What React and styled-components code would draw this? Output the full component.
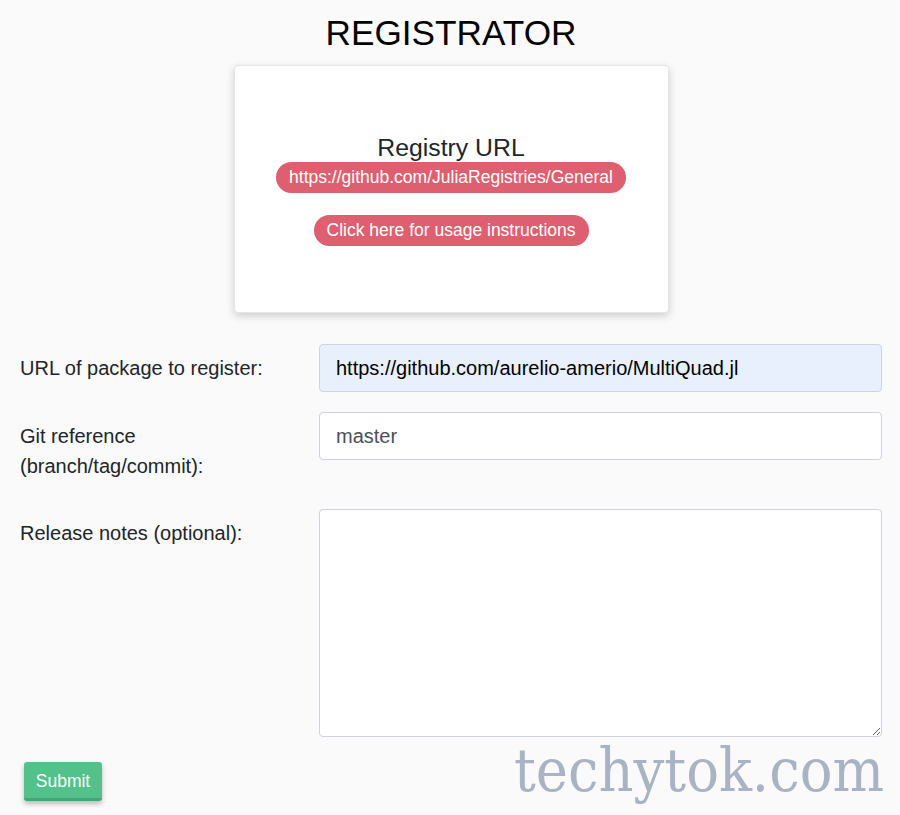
import React from "react";
import styled, { createGlobalStyle } from "styled-components";

const GlobalStyle = createGlobalStyle`
  body {
    margin: 0;
    background: #fafafa;
    font-family: "Liberation Sans", Arial, sans-serif;
    color: #212529;
  }
`;

const Page = styled.div`
  width: 900px;
  height: 815px;
  overflow: hidden;
  box-sizing: border-box;
  padding: 0 18px 0 20px;
`;

const Title = styled.h1`
  margin: 0;
  padding-top: 13px;
  height: 65px;
  box-sizing: border-box;
  text-align: center;
  font-weight: 400;
  font-size: 35.2px;
  line-height: 40px;
  color: #000;
`;

const Card = styled.div`
  width: 435px;
  height: 248px;
  margin: 0 auto;
  box-sizing: border-box;
  background: #fff;
  border: 1px solid #e6e6e6;
  border-radius: 4px;
  box-shadow: 0 3px 8px rgba(0, 0, 0, 0.18);
  display: flex;
  flex-direction: column;
  align-items: center;
  justify-content: center;
`;

const CardHeading = styled.h4`
  margin: 0;
  font-weight: 400;
  font-size: 24.8px;
  line-height: 29px;
  color: #212529;
`;

const Pill = styled.a`
  display: inline-block;
  background: #dd5f70;
  color: #fff;
  text-decoration: none;
  font-size: 17.5px;
  line-height: 31px;
  padding: 0 13px;
  border-radius: 16px;
  margin-top: ${(p) => p.$gap || 0}px;
`;

const Form = styled.form`
  margin-top: 31px;
  display: grid;
  grid-template-columns: 299px 1fr;
  row-gap: 20px;
`;

const Label = styled.label`
  padding: 9px 30px 8px 0;
  font-size: 20px;
  line-height: 30px;
  color: #212529;
`;

const Input = styled.input`
  height: 48px;
  box-sizing: border-box;
  border: 1px solid #ced4da;
  border-radius: 4px;
  padding: 0 16px;
  font-family: "Liberation Sans", Arial, sans-serif;
  font-size: 20px;
  color: ${(p) => (p.$filled ? "#000" : "#495057")};
  background: ${(p) => (p.$filled ? "#e8f0fe" : "#fff")};
  outline: none;
`;

const TextArea = styled.textarea`
  height: 228px;
  box-sizing: border-box;
  border: 1px solid #ced4da;
  border-radius: 4px;
  padding: 8px 16px;
  font-family: "Liberation Sans", Arial, sans-serif;
  font-size: 20px;
  background: #fff;
  resize: vertical;
  outline: none;
`;

const Footer = styled.div`
  margin-top: 25px;
  display: flex;
  justify-content: space-between;
  align-items: flex-start;
  padding-left: 4px;
`;

const Submit = styled.button`
  width: 78px;
  height: 39px;
  box-sizing: border-box;
  background: #52c18a;
  border: 0;
  border-bottom: 3px solid #45a576;
  border-radius: 3px;
  color: #fff;
  font-family: "Liberation Sans", Arial, sans-serif;
  font-size: 17.5px;
  padding: 2px 0 0;
  box-shadow: 0 3px 5px rgba(0, 0, 0, 0.25);
`;

const Watermark = styled.div`
  margin-top: -24px;
  margin-right: -2px;
  font-family: "DejaVu Serif Condensed", "DejaVu Serif", serif;
  font-stretch: condensed;
  font-size: 60.5px;
  line-height: 64px;
  color: #a9b3c3;
`;

export default function App() {
  return (
    <Page>
      <GlobalStyle />
      <Title>REGISTRATOR</Title>
      <Card>
        <CardHeading>Registry URL</CardHeading>
        <Pill href="#">https://github.com/JuliaRegistries/General</Pill>
        <Pill href="#" $gap={22}>
          Click here for usage instructions
        </Pill>
      </Card>
      <Form>
        <Label>URL of package to register:</Label>
        <Input $filled defaultValue="https://github.com/aurelio-amerio/MultiQuad.jl" />
        <Label>Git reference (branch/tag/commit):</Label>
        <Input defaultValue="master" />
        <Label>Release notes (optional):</Label>
        <TextArea />
      </Form>
      <Footer>
        <Submit type="button">Submit</Submit>
        <Watermark>techytok.com</Watermark>
      </Footer>
    </Page>
  );
}
